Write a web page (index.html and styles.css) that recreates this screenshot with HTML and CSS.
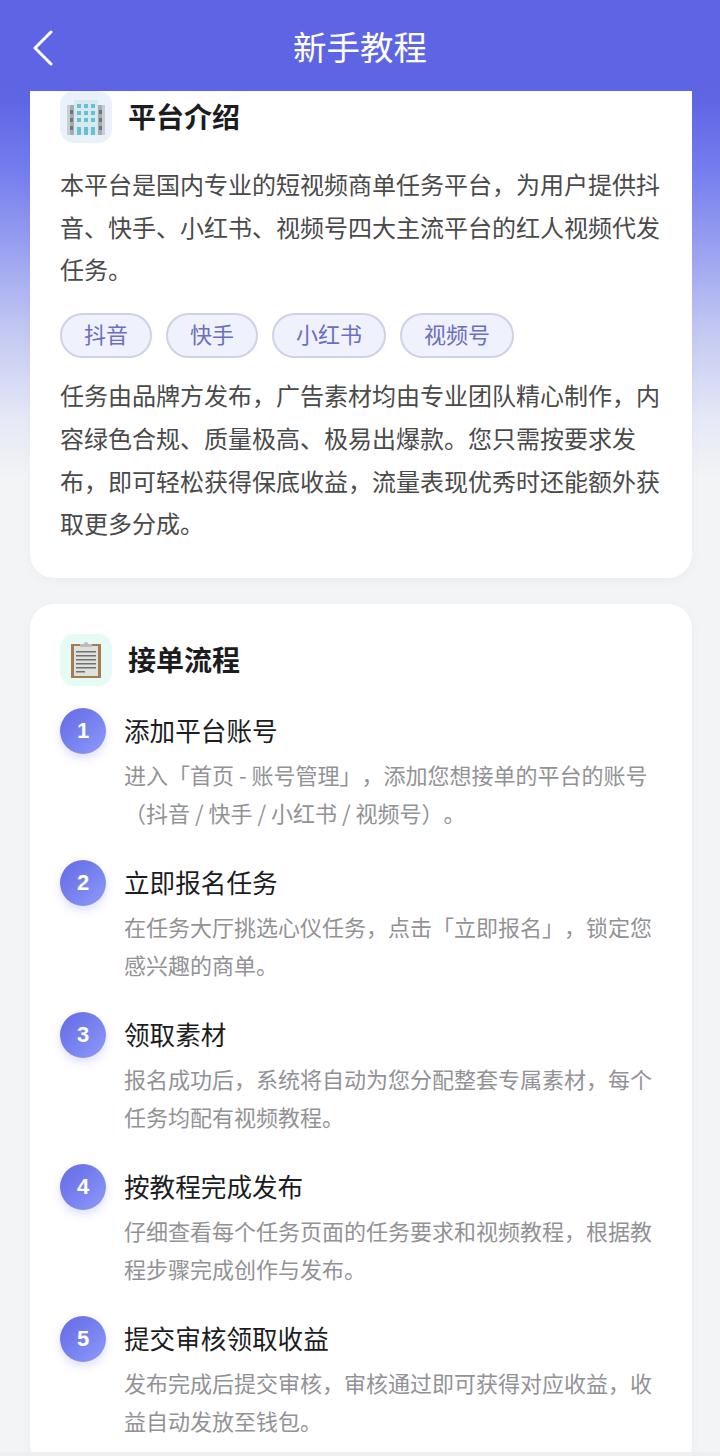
FILE: index.html
```html
<!DOCTYPE html>
<html lang="zh-CN">
<head>
<meta charset="UTF-8">
<meta name="viewport" content="width=device-width, initial-scale=1.0">
<title>新手教程</title>
<link rel="stylesheet" href="styles.css">
</head>
<body>
<div class="page">
  <header class="topbar">
    <svg class="back" width="24" height="36" viewBox="0 0 24 36"><path d="M20 2 L4 18 L20 34" fill="none" stroke="#fff" stroke-width="3" stroke-linecap="round" stroke-linejoin="round"/></svg>
    <h1>新手教程</h1>
  </header>

  <main class="scroll">
    <section class="card card-intro">
      <div class="card-head">
        <span class="head-icon icon-blue">
          <svg width="40" height="40" viewBox="0 0 40 40">
            <rect x="1" y="8" width="38" height="30" fill="#a3acb1"/>
            <rect x="1" y="8" width="3" height="30" fill="#c9ced1"/>
            <rect x="36" y="8" width="3" height="30" fill="#c9ced1"/>
            <g fill="#6b777c">
              <rect x="4" y="13" width="3" height="4"/><rect x="4" y="21" width="3" height="4"/><rect x="4" y="29" width="3" height="4"/>
              <rect x="33" y="13" width="3" height="4"/><rect x="33" y="21" width="3" height="4"/><rect x="33" y="29" width="3" height="4"/>
            </g>
            <rect x="8" y="3" width="24" height="35" fill="#d6e9ed"/>
            <g fill="#66bfd4">
              <rect x="11" y="7" width="4" height="4"/><rect x="18" y="7" width="4" height="4"/><rect x="25" y="7" width="4" height="4"/>
              <rect x="11" y="14" width="4" height="4"/><rect x="18" y="14" width="4" height="4"/><rect x="25" y="14" width="4" height="4"/>
              <rect x="11" y="21" width="4" height="4"/><rect x="18" y="21" width="4" height="4"/><rect x="25" y="21" width="4" height="4"/>
              <rect x="11" y="30" width="4" height="8"/><rect x="18" y="30" width="4" height="8"/><rect x="25" y="30" width="4" height="8"/>
            </g>
          </svg>
        </span>
        <h2>平台介绍</h2>
      </div>
      <p class="intro-text">本平台是国内专业的短视频商单任务平台，为用户提供抖音、快手、小红书、视频号四大主流平台的红人视频代发任务。</p>
      <div class="tags">
        <span class="tag">抖音</span>
        <span class="tag">快手</span>
        <span class="tag">小红书</span>
        <span class="tag">视频号</span>
      </div>
      <p class="intro-text">任务由品牌方发布，广告素材均由专业团队精心制作，内容绿色合规、质量极高、极易出爆款。您只需按要求发布，即可轻松获得保底收益，流量表现优秀时还能额外获取更多分成。</p>
    </section>

    <section class="card">
      <div class="card-head">
        <span class="head-icon icon-green">
          <svg width="30" height="36" viewBox="0 0 30 36">
            <rect x="0" y="2" width="30" height="34" fill="#a57c52"/>
            <rect x="3" y="4" width="24" height="30" fill="#e0e1dd"/>
            <path d="M9 5 V2 H13 A2 2 0 0 1 17 2 H21 V5 Z" fill="#b9bdbf"/>
            <g fill="#6e7274">
              <rect x="5" y="9" width="20" height="1.5"/>
              <rect x="5" y="13" width="20" height="1.5"/>
              <rect x="5" y="17" width="20" height="1.5"/>
              <rect x="5" y="21" width="20" height="1.5"/>
              <rect x="5" y="25" width="20" height="1.5"/>
              <rect x="5" y="29" width="9" height="1.5"/>
            </g>
          </svg>
        </span>
        <h2>接单流程</h2>
      </div>
      <ol class="steps">
        <li class="step">
          <span class="step-num">1</span>
          <div class="step-body">
            <h3>添加平台账号</h3>
            <p>进入「首页 - 账号管理」，添加您想接单的平台的账号（抖音 / 快手 / 小红书 / 视频号）。</p>
          </div>
        </li>
        <li class="step">
          <span class="step-num">2</span>
          <div class="step-body">
            <h3>立即报名任务</h3>
            <p>在任务大厅挑选心仪任务，点击「立即报名」，锁定您感兴趣的商单。</p>
          </div>
        </li>
        <li class="step">
          <span class="step-num">3</span>
          <div class="step-body">
            <h3>领取素材</h3>
            <p>报名成功后，系统将自动为您分配整套专属素材，每个任务均配有视频教程。</p>
          </div>
        </li>
        <li class="step">
          <span class="step-num">4</span>
          <div class="step-body">
            <h3>按教程完成发布</h3>
            <p>仔细查看每个任务页面的任务要求和视频教程，根据教程步骤完成创作与发布。</p>
          </div>
        </li>
        <li class="step">
          <span class="step-num">5</span>
          <div class="step-body">
            <h3>提交审核领取收益</h3>
            <p>发布完成后提交审核，审核通过即可获得对应收益，收益自动发放至钱包。</p>
          </div>
        </li>
      </ol>
    </section>
  </main>
</div>
</body>
</html>
```

FILE: styles.css
```css
* {
  box-sizing: border-box;
}

html, body {
  margin: 0;
  padding: 0;
}

body {
  font-family: "Noto Sans CJK SC", "Liberation Sans", sans-serif;
  text-spacing-trim: space-all;
  background: #f3f4f6;
}

.page {
  width: 720px;
  height: 1456px;
  display: flex;
  flex-direction: column;
  background: linear-gradient(180deg, #5c63e2 0, #5f66e4 100px, #747dee 170px, #9aa2f1 250px, #c3c8f2 330px, #e6e9f6 420px, #f3f4f6 480px);
  border-bottom: 4px solid #eeeff1;
}

/* 顶部导航 */
.topbar {
  flex: none;
  height: 91px;
  position: relative;
  display: flex;
  align-items: center;
  justify-content: center;
  background: #5e65e4;
  z-index: 1;
}

.topbar h1 {
  margin: 0;
  font-size: 33.5px;
  font-weight: 400;
  color: #fff;
}

.back {
  position: absolute;
  left: 31px;
  top: 30px;
}

/* 内容区，第一张卡片已经滚动到导航下面 */
.scroll {
  flex: 1;
  min-height: 0;
  overflow: hidden;
  padding: 0 28px 0 30px;
}

.card {
  background: #fff;
  border-radius: 24px;
  padding: 30px 30px 0;
  margin-bottom: 26px;
  box-shadow: 0 2px 10px rgba(90, 100, 160, 0.05);
}

.card-intro {
  margin-top: -30px;
  height: 517px;
}

.card-head {
  display: flex;
  align-items: center;
  gap: 17px;
  height: 52px;
}

.card-head h2 {
  margin: -2px 0 0 -1px;
  font-size: 28px;
  font-weight: 700;
  color: #1c1c1e;
}

.head-icon {
  width: 52px;
  height: 52px;
  border-radius: 14px;
  display: flex;
  align-items: center;
  justify-content: center;
}

.icon-blue {
  background: #eaf1fb;
}

.icon-green {
  background: #e6fbf5;
}

.intro-text {
  margin: 20px 0 0;
  font-size: 24px;
  line-height: 42.7px;
  color: #4a4a4a;
}

.tags {
  display: flex;
  gap: 14px;
  margin-top: 22px;
}

.tag {
  height: 45px;
  padding: 0 22px 6px;
  display: flex;
  align-items: center;
  font-size: 22px;
  line-height: 30px;
  color: #6a6fc0;
  background: #eff1fd;
  border: 2px solid #cfd2e6;
  border-radius: 23px;
}

.tags + .intro-text {
  margin-top: 16px;
}

/* 接单流程 */
.steps {
  list-style: none;
  margin: 22px 0 0;
  padding: 0;
}

.step {
  display: flex;
  gap: 18px;
  height: 152px;
}

.step-num {
  flex: none;
  width: 46px;
  height: 46px;
  border-radius: 50%;
  display: flex;
  align-items: center;
  justify-content: center;
  font-family: "Liberation Sans", sans-serif;
  font-size: 22px;
  font-weight: 700;
  color: #fff;
  background: linear-gradient(135deg, #6269e4, #8e9afa);
  box-shadow: 0 4px 10px rgba(100, 110, 240, 0.22);
}

.step-body h3 {
  margin: 2px 0 0;
  font-size: 25.6px;
  line-height: 40px;
  font-weight: 400;
  color: #1c1c1e;
}

.step-body p {
  margin: 5px 0 0;
  font-size: 22px;
  line-height: 38px;
  color: #929296;
}
```
